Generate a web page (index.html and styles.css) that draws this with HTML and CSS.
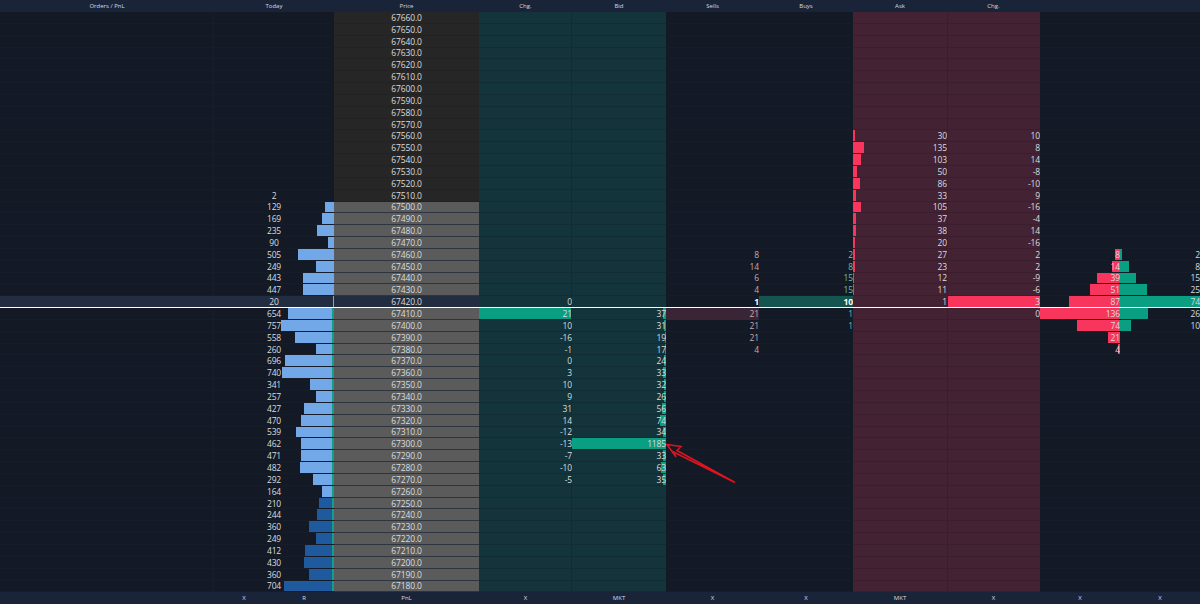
FILE: index.html
```html
<!DOCTYPE html>
<html>
<head>
	<title>Order ladder</title>
	<link rel="stylesheet" href="styles.css">
</head>
<body>
	<div class="ladder">
		<div class="head">
			<span>Orders / PnL</span><span>Today</span><span>Price</span><span>Chg.</span><span>Bid</span>
			<span>Sells</span><span>Buys</span><span>Ask</span><span>Chg.</span><span></span><span></span>
		</div>
		<div class="rows" id="rows"></div>
		<div class="foot">
			<span></span><span>X</span><span>R</span><span>PnL</span><span>X</span><span>MKT</span>
			<span>X</span><span>X</span><span>MKT</span><span>X</span><span>X</span><span>X</span>
		</div>
		<svg class="arrow" width="80" height="50" viewBox="0 0 80 50">
			<path d="M7 6.5 L21 8.5 L17 12.5 L75 44.5 L13.5 14 L16 19 Z"/>
		</svg>
	</div>

	<script type="text/javascript">
		// price: [today, chg, bid, sells, buys, ask, chg2, deltaSell, deltaBuy]
		var data={
			67560:[,,,,,30,10],
			67550:[,,,,,135,8],
			67540:[,,,,,103,14],
			67530:[,,,,,50,-8],
			67520:[,,,,,86,-10],
			67510:[2,,,,,33,9],
			67500:[129,,,,,105,-16],
			67490:[169,,,,,37,-4],
			67480:[235,,,,,38,14],
			67470:[90,,,,,20,-16],
			67460:[505,,,8,2,27,2,8,2],
			67450:[249,,,14,8,23,2,14,8],
			67440:[443,,,6,15,12,-9,39,15],
			67430:[447,,,4,15,11,-6,51,25],
			67420:[20,0,,1,10,1,3,87,74],
			67410:[654,21,37,21,1,,0,136,26],
			67400:[757,10,31,21,1,,,74,10],
			67390:[558,-16,19,21,,,,21],
			67380:[260,-1,17,4,,,,4],
			67370:[696,0,24],
			67360:[740,3,33],
			67350:[341,10,32],
			67340:[257,9,26],
			67330:[427,31,56],
			67320:[470,14,74],
			67310:[539,-12,34],
			67300:[462,-13,1185],
			67290:[471,-7,33],
			67280:[482,-10,63],
			67270:[292,-5,35],
			67260:[164],
			67250:[210],
			67240:[244],
			67230:[360],
			67220:[249],
			67210:[412],
			67200:[430],
			67190:[360],
			67180:[704]
		};
		var html='';
		function show(v){
			return v===undefined ? '' : '<b>'+v+'</b>';
		}
		function bar(cls,w){
			return '<i class="bar '+cls+'" style="width:'+w.toFixed(1)+'px"></i>';
		}
		for(var p=67660;p>=67180;p-=10){
			var d=data[p]||[];
			var cur=p==67420;
			var today=show(d[0]);
			if(d[0]!==undefined && p<67510)
				today+=bar(p<67260 ? 'vol-low' : 'vol',d[0]*0.0705);
			var bid=show(d[2]);
			if(d[2]!==undefined)
				bid+=bar('bid',d[2]*0.0793);
			var ask=show(d[5]);
			if(d[5]!==undefined && !cur)
				ask+=bar('ask',d[5]*0.0793);
			var ds=show(d[7]);
			if(d[7]!==undefined)
				ds+=bar('dsell',d[7]*0.588);
			var db=show(d[8]);
			if(d[8]!==undefined)
				db+=bar('dbuy',d[8]*1.08);
			html+='<div class="row'+(cur?' current':'')+'">'
				+'<div class="c orders"></div>'
				+'<div class="c today'+(p<67420?' below':'')+'">'+today+'</div>'
				+'<div class="c price'+(p<=67500 ? ' traded' : '')+'"><b>'+p+'.0</b></div>'
				+'<div class="c bidside chg'+(p==67410?' hot':'')+'">'+show(d[1])+'</div>'
				+'<div class="c bidside bidcol">'+bid+'</div>'
				+'<div class="c sells'+(p==67410?' mark':'')+'">'+show(d[3])+'</div>'
				+'<div class="c buys'+(cur?' mark':'')+'">'+show(d[4])+'</div>'
				+'<div class="c askside">'+ask+'</div>'
				+'<div class="c askside chg2'+(cur?' hot':'')+'">'+show(d[6])+'</div>'
				+'<div class="c">'+ds+'</div>'
				+'<div class="c">'+db+'</div>'
				+'</div>';
		}
		document.getElementById('rows').innerHTML=html;
	</script>
</body>
</html>
```
FILE: styles.css
```css
html,body{
  margin:0;
  height:100%;
  background-color:#131a26;
  overflow:hidden;
}
.ladder{
  position:relative;
  height:604px;
  display:flex;
  flex-direction:column;
  font-family:"Open Sans",sans-serif;
  font-size:8.5px;
  letter-spacing:-.15px;
  line-height:10px;
  color:#dadcde;
}
.head,.foot,.row{
  display:grid;
  grid-template-columns:214px 120px 145px 93px 94px 93px 94px 94px 93px 80px 80px;
  grid-template-rows:minmax(0,1fr);
}
.head,.foot{
  flex:0 0 12px;
  height:12px;
  background-color:#1a2438;
  font-size:6px;
  letter-spacing:0;
  line-height:12px;
  text-align:center;
  color:#d8dce2;
}
.foot{
  grid-template-columns:214px 60px 60px 145px 93px 94px 93px 94px 94px 93px 80px 80px;
}
.rows{
  flex:1 1 0;
  min-height:0;
  display:flex;
  flex-direction:column;
}
.row{
  flex:1 1 0;
  min-height:0;
}
.c{
  position:relative;
  display:flex;
  align-items:center;
  justify-content:flex-end;
  overflow:hidden;
  min-height:0;
  box-sizing:border-box;
  padding-top:1px;
  border-bottom:1px solid rgba(40,50,70,.16);
}
.c b{
  position:relative;
  z-index:1;
  font-weight:normal;
}
.bar{
  position:absolute;
  top:0;
  bottom:0;
}
.today,.price{
  justify-content:center;
}
.orders{
  box-shadow:inset -1px 0 0 #171e2b;
}
.price{
  background-color:#262626;
  border-bottom-color:#222222;
}
.price.traded{
  background-color:#5b5b5b;
  border-bottom-color:#2c3440;
}
.bidside{
  background-color:#13343a;
  border-bottom-color:#112d33;
}
.chg{
  box-shadow:inset -1px 0 0 #112d33;
}
.askside{
  background-color:#432233;
  border-bottom-color:#3b1e2d;
}
.chg2{
  box-shadow:inset 1px 0 0 #3b1e2d;
}
.vol,.vol-low{
  right:0;
}
.vol{
  background-color:#72a8e8;
}
.vol-low{
  background-color:#1f5a9e;
}
.below::after{
  content:"";
  position:absolute;
  top:-1px;
  bottom:-1px;
  right:0;
  width:2px;
  background-color:#0da08a;
}
.bid{
  right:0;
  background-color:#0a9e83;
}
.ask{
  left:0;
  background-color:#f8355c;
}
.dsell{
  right:0;
  background-color:#f8355c;
}
.dbuy{
  left:0;
  background-color:#0a9e83;
}
.sells{
  color:#c9a9ae;
}
.sells.mark{
  background-color:#392535;
}
.buys{
  color:#6fbfb0;
}
.buys.mark{
  background-color:#145550;
}
.hot.chg{
  background-color:#0a9e83;
}
.hot.chg2{
  background-color:#f8355c;
}
.current .orders,.current .today,.current .price{
  background-color:#222d42;
  box-shadow:none;
}
.current .sells,.current .buys{
  color:#fff;
}
.current .sells b,.current .buys b{
  font-weight:bold;
}
.current .c{
  border-bottom:1px solid #fff;
}
.arrow{
  position:absolute;
  left:660px;
  top:438px;
}
.arrow path{
  fill:none;
  stroke:#e0141e;
  stroke-width:1.5;
}
```
